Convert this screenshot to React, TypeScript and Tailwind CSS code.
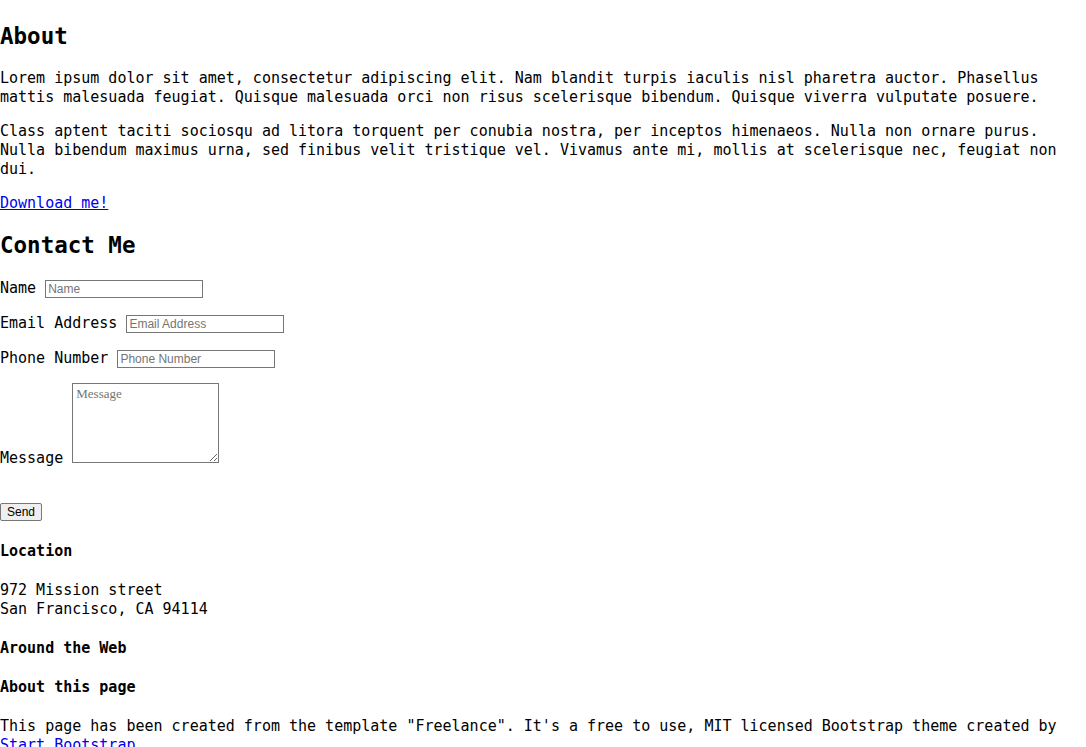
import React from 'react';

const inputCls =
  "align-baseline w-[158px] h-[18px] border border-[#767676] bg-white px-[2px] py-[1px] font-['Liberation_Sans',Arial,sans-serif] text-[12px] leading-[14px] text-black placeholder:text-[#757575] outline-none";

export default function App() {
  return (
    <div className="min-h-screen bg-white pt-[22px] font-['DejaVu_Sans_Mono',monospace] text-[15px] leading-[19px] text-black">
      {/* About */}
      <section>
        <h2 className="mb-[19px] text-[22.5px] font-bold leading-[28px]">About</h2>
        <p className="mb-[15px]">
          Lorem ipsum dolor sit amet, consectetur adipiscing elit. Nam blandit turpis iaculis nisl pharetra auctor. Phasellus mattis malesuada feugiat. Quisque malesuada orci non risus scelerisque bibendum. Quisque viverra vulputate posuere.
        </p>
        <p className="mb-[15px]">
          Class aptent taciti sociosqu ad litora torquent per conubia nostra, per inceptos himenaeos. Nulla non ornare purus. Nulla bibendum maximus urna, sed finibus velit tristique vel. Vivamus ante mi, mollis at scelerisque nec, feugiat non dui.
        </p>
        <p className="mb-[18px]">
          <a href="#" className="text-[#0000ee] underline">Download me!</a>
        </p>
      </section>

      {/* Contact */}
      <section>
        <h2 className="mb-[20px] text-[22.5px] font-bold leading-[28px]">Contact Me</h2>
        <form onSubmit={(e) => e.preventDefault()}>
          <div className="mb-[16px]">
            <label>Name</label> <input type="text" placeholder="Name" className={inputCls} />
          </div>
          <div className="mb-[16px]">
            <label>Email Address</label> <input type="email" placeholder="Email Address" className={inputCls} />
          </div>
          <div className="mb-[15px]">
            <label>Phone Number</label> <input type="tel" placeholder="Phone Number" className={inputCls} />
          </div>
          <div>
            <label>Message</label>{' '}
            <textarea
              placeholder="Message"
              className="inline-block align-baseline w-[147px] h-[80px] resize border border-[#767676] bg-white px-[3px] py-[2px] font-['Liberation_Serif',serif] text-[13px] leading-[16px] text-black placeholder:text-[#757575] outline-none"
            />
          </div>
          <div className="mt-[34px]">
            <button
              type="submit"
              className="align-baseline h-[18px] rounded-[2px] border border-[#767676] bg-[#efefef] px-[6px] py-0 font-['Liberation_Sans',Arial,sans-serif] text-[12px] leading-[14px] text-black"
            >
              Send
            </button>
          </div>
        </form>
      </section>

      {/* Footer */}
      <footer>
        <h4 className="mt-[21px] mb-[20px] font-bold">Location</h4>
        <p>
          972 Mission street
          <br />
          San Francisco, CA 94114
        </p>
        <h4 className="mt-[20px] font-bold">Around the Web</h4>
        <h4 className="mt-[20px] font-bold">About this page</h4>
        <p className="mt-[20px] mb-[15px]">
          This page has been created from the template "Freelance". It's a free to use, MIT licensed Bootstrap theme created by{' '}
          <a href="#" className="text-[#0000ee] underline">Start Bootstrap</a>.
        </p>
      </footer>
    </div>
  );
}
